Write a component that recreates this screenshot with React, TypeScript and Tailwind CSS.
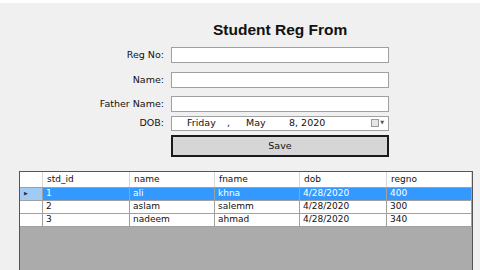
import React from "react";

const font = { fontFamily: '"DejaVu Sans", "Liberation Sans", sans-serif' };

const cols = ["std_id", "name", "fname", "dob", "regno"];
const widths = ["w-[87px]", "w-[85px]", "w-[85px]", "w-[87px]", "flex-1"];
const rows = [
  ["1", "ali", "khna", "4/28/2020", "400"],
  ["2", "aslam", "salemm", "4/28/2020", "300"],
  ["3", "nadeem", "ahmad", "4/28/2020", "340"],
];

function Field({ label, mt }: { label: string; mt: string }) {
  return (
    <div className={`flex items-center ${mt}`}>
      <div className="w-[165px] pr-[1px] text-right text-[9.5px] text-[#111]">{label}</div>
      <div className="ml-[6px] w-[218px] h-[16px] bg-white border border-[#a0a0a0]" />
    </div>
  );
}

export default function App() {
  return (
    <div className="w-[480px] h-[270px] bg-[#f0f0f0] overflow-hidden flex flex-col" style={font}>
      <div className="h-[3px] bg-white" />
      <div
        className="mt-[17px] h-[20px] flex items-center pl-[213px] text-[15.5px] font-bold text-[#111] leading-none"
        style={{ fontFamily: '"Liberation Sans", Arial, sans-serif' }}
      >
        Student Reg From
      </div>
      <Field label="Reg No:" mt="mt-[7px]" />
      <Field label="Name:" mt="mt-[9px]" />
      <Field label="Father Name:" mt="mt-[8px]" />
      <div className="flex items-center mt-[4px]">
        <div className="w-[165px] pr-[1px] text-right text-[9.5px] text-[#111]">DOB:</div>
        <div className="ml-[6px] w-[218px] h-[15px] bg-white border border-[#a0a0a0] flex items-center text-[9.5px] text-[#111] relative">
          <span className="ml-[15px] w-[40px]">Friday</span>
          <span className="w-[19px]">,</span>
          <span className="w-[43px]">May</span>
          <span>8, 2020</span>
          <span className="absolute right-[4px] top-[2px] flex items-center gap-[1px]">
            <span className="w-[8px] h-[8px] border border-[#9a9a9a] bg-[#e6e6e6]" />
            <span className="text-[5px] text-[#555]">▼</span>
          </span>
        </div>
      </div>
      <div className="flex mt-[4px]">
        <div className="ml-[171px] w-[218px] h-[22px] bg-[#d6d6d6] border-2 border-[#1a1a1a] flex items-center justify-center text-[9.5px] text-[#111]">
          Save
        </div>
      </div>
      <div className="mt-[14px] ml-[19px] w-[454px] flex-1 border border-[#555] border-b-0 bg-[#ababab] flex flex-col text-[9px]">
        <div className="flex h-[16px] bg-white border-b border-[#a0a0a0]">
          <div className="w-[23px] border-r border-[#d8d8d8]" />
          {cols.map((c, i) => (
            <div key={c} className={`${widths[i]} pl-[4px] border-r border-[#d8d8d8] text-[#111] flex items-center`}>
              {c}
            </div>
          ))}
        </div>
        {rows.map((r, ri) => (
          <div key={ri} className="flex h-[13px] border-b border-[#a0a0a0]">
            <div className={`w-[23px] border-r border-[#a0a0a0] flex items-center pl-[4px] ${ri === 0 ? "bg-[#9fcbf5]" : "bg-white"}`}>
              {ri === 0 && <span className="text-[5px] text-[#333]">▶</span>}
            </div>
            {r.map((v, i) => (
              <div
                key={i}
                className={`${widths[i]} pl-[3px] border-r border-[#a0a0a0] flex items-center ${ri === 0 ? "bg-[#3399ff] text-white" : "bg-white text-[#111]"}`}
              >
                {v}
              </div>
            ))}
          </div>
        ))}
      </div>
    </div>
  );
}
